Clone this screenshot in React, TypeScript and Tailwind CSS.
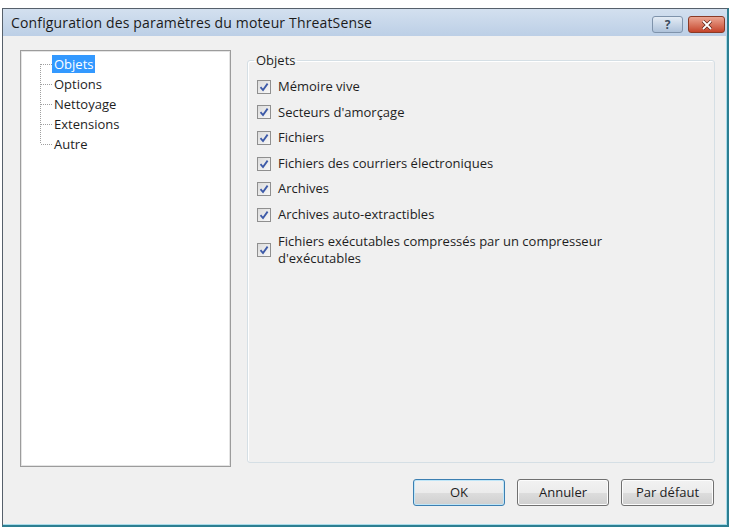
import React from 'react';

const treeItems = ['Objets', 'Options', 'Nettoyage', 'Extensions', 'Autre'];

const options = [
  'Mémoire vive',
  "Secteurs d'amorçage",
  'Fichiers',
  'Fichiers des courriers électroniques',
  'Archives',
  'Archives auto-extractibles',
];

function CheckBox() {
  return (
    <span className="w-[14px] h-[14px] shrink-0 border border-[#8f8f8f] bg-gradient-to-br from-[#dcdcdc] to-[#f8f8f8] flex items-center justify-center">
      <svg width="10" height="10" viewBox="0 0 10 10">
        <path d="M1.5 5.2 L4 8 L8.6 1.6" fill="none" stroke="#3d5aa8" strokeWidth="1.8" />
      </svg>
    </span>
  );
}

function TreeRow({ label, index }: { label: string; index: number }) {
  const first = index === 0;
  const last = index === treeItems.length - 1;
  return (
    <div className="flex items-center h-[20px]">
      <svg width="30" height="20" className="shrink-0">
        <line
          x1="18.5"
          x2="18.5"
          y1={first ? 10 : 0}
          y2={last ? 10 : 20}
          stroke="#a0a0a0"
          strokeDasharray="1 1"
        />
        <line x1="19" x2="30" y1="10.5" y2="10.5" stroke="#a0a0a0" strokeDasharray="1 1" />
      </svg>
      <span
        className={
          first
            ? 'px-[2px] leading-[18px] bg-[#3399ff] text-white'
            : 'px-[2px] leading-[18px]'
        }
      >
        {label}
      </span>
    </div>
  );
}

function Button({ children, primary = false, width }: { children: React.ReactNode; primary?: boolean; width: string }) {
  return (
    <button
      className={
        (primary
          ? 'border-[#3c7fb1] shadow-[inset_0_0_0_1px_#bfe6f8] '
          : 'border-[#707070] shadow-[inset_0_0_0_1px_#fcfcfc] ') +
        width +
        ' h-[27px] rounded-[3px] border bg-[linear-gradient(to_bottom,#f2f2f2_0%,#ebebeb_50%,#dddddd_50%,#cfcfcf_100%)] text-[13px] text-[#1e1e1e] flex items-center justify-center'
      }
    >
      {children}
    </button>
  );
}

export default function App() {
  return (
    <div className="w-[731px] h-[528px] bg-white pt-[8px] pl-[2px] font-['Open_Sans','Noto_Sans',sans-serif] text-[13px] text-[#1e1e1e]">
      <div className="w-[727px] h-[519px] flex flex-col border-l border-t border-[#56606b] border-r-2 border-b-2 border-r-[#2d7f92] border-b-[#2d7f92]">
        {/* barre de titre */}
        <div className="h-[27px] shrink-0 flex items-center justify-between bg-gradient-to-b from-[#d3e0ef] to-[#bccfe6] pl-[8px] pr-[2px]">
          <span className="text-[14px] text-[#1b1b1b] tracking-[0.15px]">
            Configuration des paramètres du moteur ThreatSense
          </span>
          <div className="flex gap-[5px] mt-[4px]">
            <div className="w-[31px] h-[17px] rounded-[3px] border border-[#7f93ab] bg-gradient-to-b from-[#e4ecf5] to-[#aec2da] flex items-center justify-center">
              <span className="text-[12px] leading-none font-bold text-[#3b4b5e]">?</span>
            </div>
            <div className="w-[37px] h-[17px] rounded-[3px] border border-[#8a3a26] bg-gradient-to-b from-[#eaa592] to-[#c4432a] flex items-center justify-center">
              <svg width="12" height="10" viewBox="0 0 12 10">
                <path d="M2 1 L10 9 M10 1 L2 9" stroke="#5a1e12" strokeWidth="3.2" />
                <path d="M2 1 L10 9 M10 1 L2 9" stroke="#ffffff" strokeWidth="1.8" />
              </svg>
            </div>
          </div>
        </div>

        {/* contenu */}
        <div className="flex-1 bg-[#f0f0f0] flex flex-col border-r border-b border-[#a9dcea]">
          <div className="flex gap-[16px] pt-[14px] pl-[17px]">
            <div className="w-[211px] h-[417px] bg-white border border-[#9c9c9c] shadow-[inset_0_0_0_1px_#e4e4e4] pt-[3px] pl-[1px]">
              {treeItems.map((t, i) => (
                <TreeRow key={t} label={t} index={i} />
              ))}
            </div>

            <fieldset className="w-[468px] h-[413px] border border-[#d5dfe5] rounded-[3px] shadow-[inset_1px_1px_0_#ffffff] pl-[9px]">
              <legend className="ml-[-3px] px-[2px] leading-[20px]">Objets</legend>
              <div className="flex flex-col pt-[4px]">
                {options.map((o) => (
                  <div key={o} className="h-[25.6px] flex items-center gap-[7px]">
                    <CheckBox />
                    <span>{o}</span>
                  </div>
                ))}
                <div className="flex items-center gap-[7px] pt-[5px]">
                  <CheckBox />
                  <span className="leading-[17px]">
                    Fichiers exécutables compressés par un compresseur
                    <br />
                    d'exécutables
                  </span>
                </div>
              </div>
            </fieldset>
          </div>

          <div className="flex justify-end gap-[12px] pr-[12px] mt-[12px]">
            <Button primary width="w-[92px]">OK</Button>
            <Button width="w-[92px]">Annuler</Button>
            <Button width="w-[93px]">Par défaut</Button>
          </div>
        </div>
      </div>
    </div>
  );
}
